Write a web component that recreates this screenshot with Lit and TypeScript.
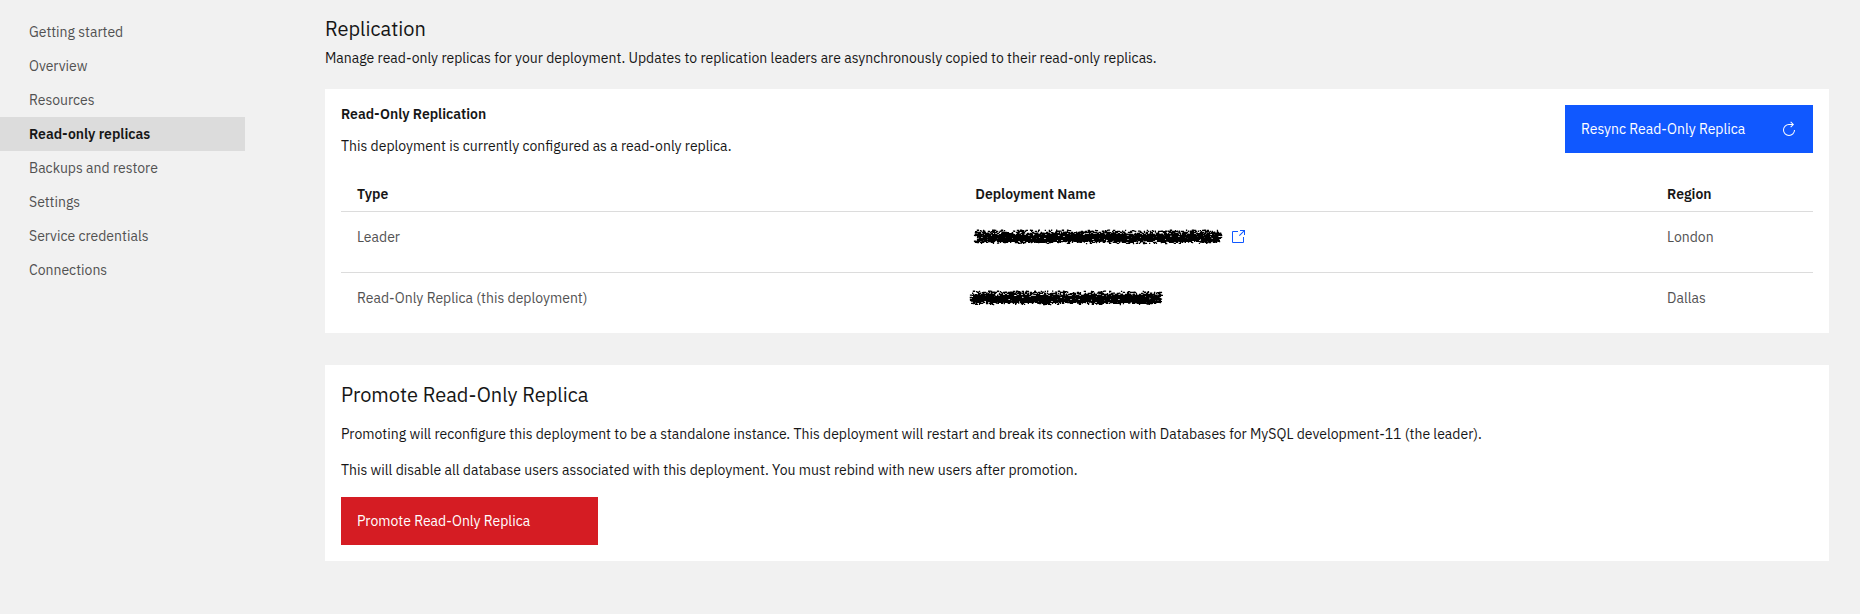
import { LitElement, html, svg, css } from "lit";
import { customElement, state } from "lit/decorators.js";
import { classMap } from "lit/directives/class-map.js";

interface Replica {
  type: string;
  region: string;
  /** Horizontal extent of the blacked-out name, relative to the cell's text edge. */
  start: number;
  length: number;
  linked: boolean;
}

const NAV = [
  "Getting started",
  "Overview",
  "Resources",
  "Read-only replicas",
  "Backups and restore",
  "Settings",
  "Service credentials",
  "Connections",
];

const REPLICAS: Replica[] = [
  { type: "Leader", region: "London", start: -1, length: 248, linked: true },
  { type: "Read-Only Replica (this deployment)", region: "Dallas", start: -5, length: 193, linked: false },
];

/** Small repeatable random generator, so the marker strokes look the same on every render. */
function randomFrom(seed: number) {
  return () => {
    seed = (seed * 1664525 + 1013904223) % 4294967296;
    return seed / 4294967296;
  };
}

/** Share of ink in each pixel row of a dry marker stroke, from top to bottom. */
const INK = [0.22, 0.5, 0.58, 0.7, 0.88, 0.96, 0.98, 0.99, 0.98, 0.97, 0.97, 0.9, 0.6, 0.18];

function markerStroke(start: number, length: number) {
  const random = randomFrom(17);
  let d = "";
  INK.forEach((ink, row) => {
    const from = start + Math.floor(random() * 4);
    const to = start + length - Math.floor(random() * 4);
    for (let x = from; x < to; ) {
      const run = random() < 0.6 ? 1 : 2;
      if (random() < ink) {
        const y = row + 0.5 + random() * 0.4;
        const left = x - random() * 0.3;
        d += `M${left.toFixed(1)} ${y.toFixed(1)}h${run + 0.3}v1.3h-${run + 0.3}z`;
      }
      x += run;
    }
  });
  return d;
}

const launchIcon = svg`
  <path d="M26 28H6a2 2 0 0 1-2-2V6a2 2 0 0 1 2-2h10v2H6v20h20V16h2v10a2 2 0 0 1-2 2z" />
  <path d="M20 2v2h6.586L18 12.586 19.414 14 28 5.414V12h2V2z" />`;

const restartIcon = svg`
  <path d="M26 18A10 10 0 1 1 16 8h6.182l-3.584 3.585L20 13l6-6-6-6-1.402 1.414L22.185 6H16a12 12 0 1 0 12 12z" />`;

@customElement("app-root")
export class AppRoot extends LitElement {
  @state() private current = "Read-only replicas";

  static styles = css`
    :host {
      display: block;
      box-sizing: border-box;
      min-height: 100vh;
      background: #f1f1f1;
      color: #161616;
      font: 400 14px/18px "IBM Plex Sans", "Open Sans", sans-serif;
    }
    * {
      box-sizing: border-box;
    }
    h1,
    h2,
    h3,
    p,
    ul {
      margin: 0;
      padding: 0;
      font: inherit;
    }
    .layout {
      display: grid;
      grid-template-columns: 245px minmax(0, 1fr);
      column-gap: 80px;
      padding: 15px 31px 0 0;
    }
    .nav ul {
      list-style: none;
    }
    .nav-link {
      display: block;
      padding: 8px 29px;
      color: #525252;
      text-decoration: none;
    }
    .nav-link.current {
      background: #dcdcdc;
      color: #161616;
      font-weight: 600;
    }
    .main {
      padding-bottom: 32px;
    }
    .main .title {
      font-size: 20px;
      line-height: 28px;
    }
    .lead {
      margin-top: 6px;
    }
    .card {
      background: #fff;
      padding: 16px;
    }
    .replication {
      margin-top: 22px;
      padding-bottom: 0;
    }
    .card-head {
      display: flex;
      justify-content: space-between;
      align-items: flex-start;
    }
    .subtitle {
      font-weight: 600;
    }
    .card-head p {
      margin-top: 14px;
    }
    .button {
      display: flex;
      align-items: center;
      justify-content: space-between;
      height: 48px;
      border: 0;
      padding: 0 16px;
      color: #fff;
      font: inherit;
      cursor: pointer;
    }
    .button.primary {
      background: #1058ff;
      min-width: 248px;
    }
    .button.danger {
      background: #d51c23;
      min-width: 257px;
    }
    .icon {
      display: block;
      width: 16px;
      height: 16px;
      fill: currentColor;
    }
    table {
      width: 100%;
      margin-top: 30px;
      border-collapse: separate;
      border-spacing: 0;
      table-layout: fixed;
    }
    .col-type {
      width: 42%;
    }
    .col-name {
      width: 47%;
    }
    th,
    td {
      text-align: left;
      vertical-align: top;
      font-weight: 400;
      color: #525252;
      padding: 16px 16px 26px;
    }
    thead th {
      padding: 0 16px 8px;
      font-weight: 600;
      color: #161616;
    }
    thead th,
    tbody tr:not(:last-child) > * {
      border-bottom: 1px solid #dcdcdc;
    }
    .name {
      display: flex;
      align-items: center;
      gap: 8px;
      height: 18px;
    }
    .redaction {
      display: block;
      height: 16px;
      overflow: visible;
      fill: #000;
    }
    .launch {
      color: #1058ff;
    }
    .promote {
      margin-top: 32px;
    }
    .promote p,
    .promote .button {
      margin-top: 18px;
    }
    .promote .title + p {
      margin-top: 16px;
    }
  `;

  private select(event: Event, item: string) {
    event.preventDefault();
    this.current = item;
  }

  private renderRow(replica: Replica) {
    const width = replica.start + replica.length;
    return html`
      <tr>
        <td>${replica.type}</td>
        <td>
          <div class="name">
            <svg class="redaction" width=${width} height="16" role="img" aria-label="Redacted deployment name">
              <path d=${markerStroke(replica.start, replica.length)} />
            </svg>
            ${replica.linked
              ? html`<a class="launch" href="#leader" aria-label="Open leader deployment">
                  <svg class="icon" viewBox="0 0 32 32" aria-hidden="true">${launchIcon}</svg>
                </a>`
              : null}
          </div>
        </td>
        <td>${replica.region}</td>
      </tr>
    `;
  }

  render() {
    return html`
      <div class="layout">
        <nav class="nav" aria-label="Deployment">
          <ul>
            ${NAV.map(
              (item) => html`<li>
                <a
                  class=${classMap({ "nav-link": true, current: item === this.current })}
                  href="#"
                  aria-current=${item === this.current ? "page" : "false"}
                  @click=${(e: Event) => this.select(e, item)}
                  >${item}</a
                >
              </li>`
            )}
          </ul>
        </nav>
        <main class="main">
          <h1 class="title">Replication</h1>
          <p class="lead">
            Manage read-only replicas for your deployment. Updates to replication leaders are asynchronously copied to
            their read-only replicas.
          </p>

          <section class="card replication">
            <div class="card-head">
              <div>
                <h3 class="subtitle">Read-Only Replication</h3>
                <p>This deployment is currently configured as a read-only replica.</p>
              </div>
              <button class="button primary" type="button">
                Resync Read-Only Replica
                <svg class="icon" viewBox="0 0 32 32" aria-hidden="true">${restartIcon}</svg>
              </button>
            </div>
            <table>
              <colgroup>
                <col class="col-type" />
                <col class="col-name" />
                <col />
              </colgroup>
              <thead>
                <tr>
                  <th scope="col">Type</th>
                  <th scope="col">Deployment Name</th>
                  <th scope="col">Region</th>
                </tr>
              </thead>
              <tbody>
                ${REPLICAS.map((replica) => this.renderRow(replica))}
              </tbody>
            </table>
          </section>

          <section class="card promote">
            <h2 class="title">Promote Read-Only Replica</h2>
            <p>
              Promoting will reconfigure this deployment to be a standalone instance. This deployment will restart and
              break its connection with Databases for MySQL development-11 (the leader).
            </p>
            <p>
              This will disable all database users associated with this deployment. You must rebind with new users after
              promotion.
            </p>
            <button class="button danger" type="button">Promote Read-Only Replica</button>
          </section>
        </main>
      </div>
    `;
  }
}
